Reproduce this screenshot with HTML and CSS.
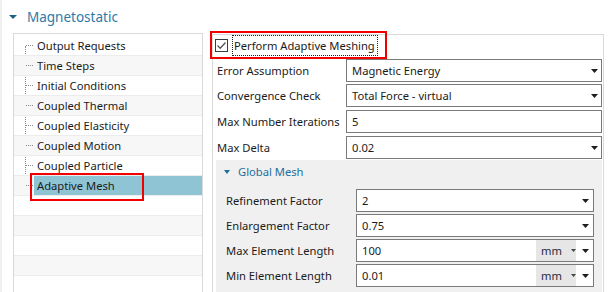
FILE: index.html
```html
<!doctype html>
<html lang="en">
<head>
    <meta charset="UTF-8">
    <title>Magnetostatic</title>
    <link rel="stylesheet" href="styles.css">
</head>
<body>
<div class="page">
    <div class="section-head">
        <svg class="caret" width="8" height="4" viewBox="0 0 8 4"><polygon points="0,0 8,0 4,4"/></svg>
        <span>Magnetostatic</span>
    </div>
    <div class="content">
        <div class="tree">
            <ul class="tree-list">
                <li class="node"><span class="label">Output Requests</span></li>
                <li class="node"><span class="label">Time Steps</span></li>
                <li class="node"><span class="label">Initial Conditions</span></li>
                <li class="node"><span class="label">Coupled Thermal</span></li>
                <li class="node"><span class="label">Coupled Elasticity</span></li>
                <li class="node"><span class="label">Coupled Motion</span></li>
                <li class="node"><span class="label">Coupled Particle</span></li>
                <li class="node selected"><span class="label">Adaptive Mesh</span><span class="mark mark-tree"></span></li>
            </ul>
            <div class="filler"></div>
            <div class="filler"></div>
            <div class="filler"></div>
            <div class="filler"></div>
            <div class="filler"></div>
        </div>
        <div class="props">
            <div class="check-row">
                <span class="checkbox">
                    <svg width="11" height="11" viewBox="0 0 11 11"><polyline points="1.5,5.5 4.2,8.2 9.5,2.5"/></svg>
                </span>
                <span class="check-label">Perform Adaptive Meshing</span>
                <span class="mark mark-check"></span>
            </div>
            <div class="field">
                <span class="field-label">Error Assumption</span>
                <div class="box">
                    <span class="value">Magnetic Energy</span>
                    <svg class="arrow" width="7" height="4" viewBox="0 0 7 4"><polygon points="0,0 7,0 3.5,4"/></svg>
                </div>
            </div>
            <div class="field">
                <span class="field-label">Convergence Check</span>
                <div class="box">
                    <span class="value">Total Force - virtual</span>
                    <svg class="arrow" width="7" height="4" viewBox="0 0 7 4"><polygon points="0,0 7,0 3.5,4"/></svg>
                </div>
            </div>
            <div class="field">
                <span class="field-label">Max Number Iterations</span>
                <div class="box">
                    <span class="value">5</span>
                </div>
            </div>
            <div class="field">
                <span class="field-label">Max Delta</span>
                <div class="box">
                    <span class="value">0.02</span>
                    <svg class="arrow" width="7" height="4" viewBox="0 0 7 4"><polygon points="0,0 7,0 3.5,4"/></svg>
                </div>
            </div>
            <div class="group">
                <div class="group-head">
                    <svg class="caret small" width="6" height="4" viewBox="0 0 6 4"><polygon points="0,0 6,0 3,4"/></svg>
                    <span>Global Mesh</span>
                </div>
                <div class="group-body">
                    <div class="field sub">
                        <span class="field-label">Refinement Factor</span>
                        <div class="box">
                            <span class="value">2</span>
                            <svg class="arrow" width="7" height="4" viewBox="0 0 7 4"><polygon points="0,0 7,0 3.5,4"/></svg>
                        </div>
                    </div>
                    <div class="field sub">
                        <span class="field-label">Enlargement Factor</span>
                        <div class="box">
                            <span class="value">0.75</span>
                            <svg class="arrow" width="7" height="4" viewBox="0 0 7 4"><polygon points="0,0 7,0 3.5,4"/></svg>
                        </div>
                    </div>
                    <div class="field sub">
                        <span class="field-label">Max Element Length</span>
                        <div class="box">
                            <span class="value">100</span>
                            <span class="unit">mm<svg class="unit-arrow" width="5" height="3" viewBox="0 0 5 3"><polygon points="0,0 5,0 2.5,3"/></svg></span>
                            <svg class="arrow" width="7" height="4" viewBox="0 0 7 4"><polygon points="0,0 7,0 3.5,4"/></svg>
                        </div>
                    </div>
                    <div class="field sub">
                        <span class="field-label">Min Element Length</span>
                        <div class="box">
                            <span class="value">0.01</span>
                            <span class="unit">mm<svg class="unit-arrow" width="5" height="3" viewBox="0 0 5 3"><polygon points="0,0 5,0 2.5,3"/></svg></span>
                            <svg class="arrow" width="7" height="4" viewBox="0 0 7 4"><polygon points="0,0 7,0 3.5,4"/></svg>
                        </div>
                    </div>
                </div>
            </div>
        </div>
    </div>
</div>
</body>
</html>
```

FILE: styles.css
```css
html, body {
    margin: 0;
    padding: 0;
}
body {
    width: 609px;
    height: 292px;
    overflow: hidden;
    background: #fff;
    font-family: "Noto Sans", "Open Sans", sans-serif;
    font-size: 11.2px;
    color: #1b1b1b;
}
.page {
    height: 292px;
    overflow: hidden;
    border-left: 2px solid #f0f0f0;
}

/* header */
.section-head {
    height: 33px;
    display: flex;
    align-items: center;
    padding-left: 7px;
    font-size: 13.5px;
    color: #2b7aa9;
}
.section-head .caret {
    margin: 1px 10px 0 0;
    fill: #1f5f86;
}

.content {
    display: flex;
    align-items: flex-start;
    padding-left: 11px;
}

/* tree */
.tree {
    width: 190px;
    height: 259px;
    box-sizing: border-box;
    border: 1px solid #d9d9d9;
    border-bottom: none;
    padding-top: 2px;
}
.tree-list {
    list-style: none;
    margin: 0;
    padding: 0;
    position: relative;
}
.tree-list::before {
    content: "";
    position: absolute;
    left: 11px;
    top: 10px;
    bottom: 10px;
    border-left: 1px dotted #8a8a8a;
}
.node, .filler {
    height: 19px;
    border-bottom: 1px solid #ececec;
}
.node {
    position: relative;
    display: flex;
    padding-left: 20px;
    line-height: 19px;
    white-space: nowrap;
}
.node::before {
    content: "";
    position: absolute;
    left: 12px;
    top: 9px;
    width: 7px;
    border-top: 1px dotted #8a8a8a;
}
.node:nth-child(even), .filler:nth-child(odd) {
    background: #f7f7f7;
}
.node .label {
    flex: 1;
    padding-left: 3px;
}
.node.selected .label {
    background: #8fc4d4;
}

/* red annotation marks */
.mark {
    position: absolute;
    box-sizing: border-box;
    border: 2px solid #f20000;
    pointer-events: none;
}
.mark-tree {
    left: 16px;
    top: -3px;
    width: 114px;
    height: 28px;
}
.mark-check {
    left: -3px;
    top: -4px;
    width: 177px;
    height: 28px;
}

/* property panel */
.props {
    width: 392px;
    height: 258px;
    box-sizing: border-box;
    margin: 1px 0 0 9px;
    border: 1px solid #dadada;
    border-bottom: none;
    padding-right: 1px;
}
.check-row {
    position: relative;
    height: 24px;
    display: flex;
    align-items: flex-start;
    padding-left: 2px;
}
.checkbox {
    width: 11px;
    height: 11px;
    margin-top: 4px;
    border: 1px solid #3c3c3c;
    background: #fff;
    display: flex;
}
.checkbox polyline {
    fill: none;
    stroke: #555;
    stroke-width: 1.3;
}
.check-label {
    margin-left: 4px;
    height: 19px;
    line-height: 19px;
    padding: 0 2px 0 1px;
    border: 1px dotted #222;
}

.field {
    display: flex;
    align-items: center;
    height: 23px;
    padding-left: 4px;
    margin-bottom: 3px;
}
.check-row + .field {
    margin-bottom: 2px;
}
.field-label {
    width: 129px;
    flex: none;
    white-space: nowrap;
}
.box {
    flex: 1;
    height: 23px;
    box-sizing: border-box;
    border: 1px solid #7a7a7a;
    background: #fff;
    display: flex;
    align-items: center;
    padding: 0 3px 0 5px;
}
.box .value {
    flex: 1;
}
.arrow {
    fill: #1e1e1e;
    flex: none;
}
.unit {
    align-self: stretch;
    display: flex;
    align-items: center;
    width: 40px;
    box-sizing: border-box;
    padding-left: 5px;
    margin-right: 6px;
    background: #e6e6e6;
    color: #2a2a3a;
}
.unit-arrow {
    margin-left: 9px;
    fill: #444;
}

/* global mesh group */
.group {
    margin: -2px 0 0 3px;
    height: 140px;
    background: #f0f0f0;
}
.group-head {
    height: 22px;
    display: flex;
    align-items: center;
    padding-left: 8px;
    color: #1d6f9c;
}
.group-head .caret {
    margin: 1px 8px 0 0;
    fill: #1d6f9c;
}
.group-body {
    padding: 7px 8px 0 0;
}
.field.sub {
    padding-left: 10px;
    margin-bottom: 2px;
}
.field.sub .field-label {
    width: 130px;
}
.field.sub .box {
    padding-right: 4px;
}
```
